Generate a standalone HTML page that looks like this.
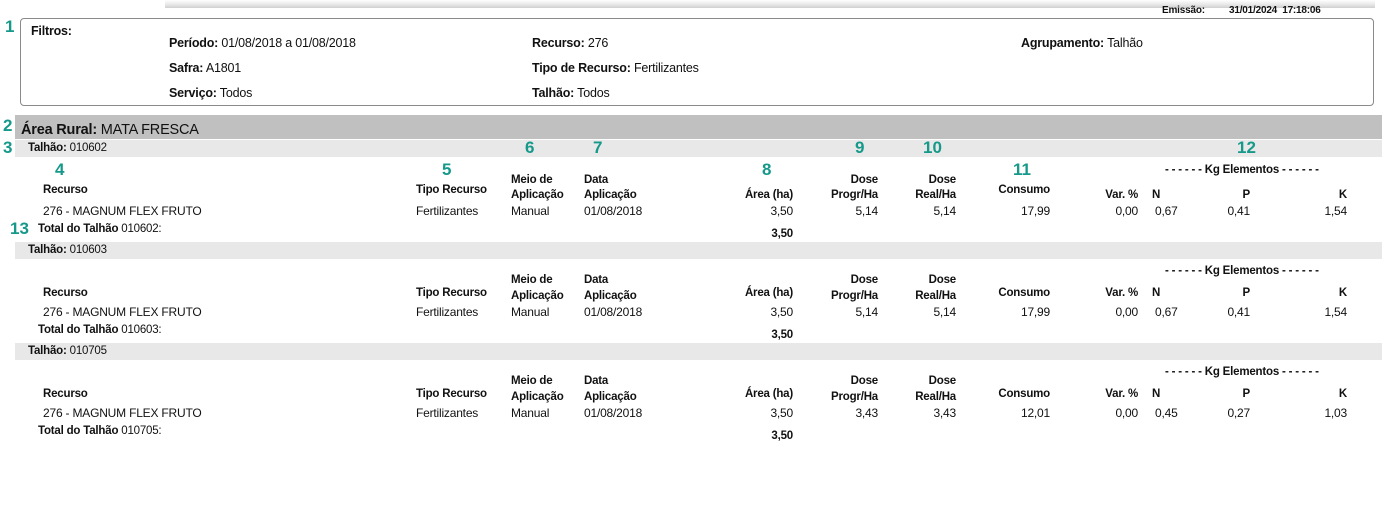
<!DOCTYPE html>
<html><head><meta charset="utf-8"><style>
body{margin:0;width:1394px;height:532px;background:#fff;position:relative;overflow:hidden;font-family:"Liberation Sans",Arial,sans-serif;color:#111;}
.a{position:absolute;white-space:nowrap;font-size:12px;line-height:14px;letter-spacing:-0.2px}
.r{text-align:right}
b{font-weight:bold}
.g{position:absolute;color:#16998a;font-weight:bold;font-size:17px;line-height:18px;z-index:10}
.f{font-size:12.5px}
.bar{position:absolute;left:15px;width:1367px;height:17px;background:#e8e8e8}
</style></head><body>
<div style="position:absolute;left:165px;top:0;width:1210px;height:8px;background:linear-gradient(#fff,#e6e6e6 60%,#cfcfcf)"></div>
<div class="a" style="left:1162px;top:4px;font-size:10px;font-weight:bold">Emissão:</div>
<div class="a" style="left:1229px;top:4px;font-size:10px;font-weight:bold">31/01/2024&nbsp; 17:18:06</div>
<div style="position:absolute;left:20px;top:18px;width:1352px;height:86px;border:1.5px solid #8a8a8a;border-radius:4px"></div>
<div class="g" style="left:5px;top:18px">1</div>
<div class="a f" style="left:31px;top:24px"><b>Filtros:</b></div>
<div class="a f" style="left:169px;top:36px"><b>Período:</b> 01/08/2018 a 01/08/2018</div>
<div class="a f" style="left:169px;top:61px"><b>Safra:</b> A1801</div>
<div class="a f" style="left:169px;top:86px"><b>Serviço:</b> Todos</div>
<div class="a f" style="left:532px;top:36px"><b>Recurso:</b> 276</div>
<div class="a f" style="left:532px;top:61px"><b>Tipo de Recurso:</b> Fertilizantes</div>
<div class="a f" style="left:532px;top:86px"><b>Talhão:</b> Todos</div>
<div class="a f" style="left:1021px;top:36px"><b>Agrupamento:</b> Talhão</div>
<div style="position:absolute;left:15px;top:115px;width:1367px;height:24px;background:#c0c0c0"></div>
<div class="g" style="left:3px;top:117px">2</div>
<div class="a" style="left:21px;top:122px;font-size:14.5px;line-height:16px"><b>Área Rural:</b> MATA FRESCA</div>
<div class="g" style="left:3px;top:139px">3</div>
<div class="g" style="left:55px;top:161px">4</div>
<div class="g" style="left:442px;top:161px">5</div>
<div class="g" style="left:525px;top:139px">6</div>
<div class="g" style="left:593px;top:139px">7</div>
<div class="g" style="left:762px;top:161px">8</div>
<div class="g" style="left:855px;top:139px">9</div>
<div class="g" style="left:923px;top:139px">10</div>
<div class="g" style="left:1013px;top:161px">11</div>
<div class="g" style="left:1237px;top:139px">12</div>
<div class="g" style="left:10px;top:220px">13</div>

<div style="position:absolute;left:0;top:140px;width:1394px;height:102px">
<div class="bar" style="top:0"></div>
<div class="a" style="left:28px;top:1px;font-size:11.5px"><b>Talhão:</b> 010602</div>
<div class="a" style="left:1165px;top:23px;font-weight:bold;font-size:11.5px">- - - - - - Kg Elementos - - - - - -</div>
<div class="a" style="left:511px;top:33px;font-weight:bold;font-size:11.5px">Meio de</div>
<div class="a" style="left:584px;top:33px;font-weight:bold;font-size:11.5px">Data</div>
<div class="a r" style="right:516px;top:33px;font-weight:bold;font-size:11.5px">Dose</div>
<div class="a r" style="right:438px;top:33px;font-weight:bold;font-size:11.5px">Dose</div>
<div class="a" style="left:43px;top:43px;font-weight:bold;font-size:11.5px">Recurso</div>
<div class="a" style="left:416px;top:43px;font-weight:bold;font-size:11.5px">Tipo Recurso</div>
<div class="a r" style="right:344px;top:43px;font-weight:bold;font-size:11.5px">Consumo</div>
<div class="a" style="left:511px;top:48px;font-weight:bold;font-size:11.5px">Aplicação</div>
<div class="a" style="left:584px;top:48px;font-weight:bold;font-size:11.5px">Aplicação</div>
<div class="a r" style="right:601px;top:48px;font-weight:bold;font-size:11.5px">Área (ha)</div>
<div class="a r" style="right:516px;top:48px;font-weight:bold;font-size:11.5px">Progr/Ha</div>
<div class="a r" style="right:438px;top:48px;font-weight:bold;font-size:11.5px">Real/Ha</div>
<div class="a r" style="right:256px;top:48px;font-weight:bold;font-size:11.5px">Var. %</div>
<div class="a" style="left:1152px;top:48px;font-weight:bold;font-size:11.5px">N</div>
<div class="a r" style="right:144px;top:48px;font-weight:bold;font-size:11.5px">P</div>
<div class="a r" style="right:47px;top:48px;font-weight:bold;font-size:11.5px">K</div>
<div class="a" style="left:43px;top:64px">276 - MAGNUM FLEX FRUTO</div>
<div class="a" style="left:416px;top:64px">Fertilizantes</div>
<div class="a" style="left:511px;top:64px">Manual</div>
<div class="a" style="left:584px;top:64px">01/08/2018</div>
<div class="a r" style="right:601px;top:64px">3,50</div>
<div class="a r" style="right:516px;top:64px">5,14</div>
<div class="a r" style="right:438px;top:64px">5,14</div>
<div class="a r" style="right:344px;top:64px">17,99</div>
<div class="a r" style="right:256px;top:64px">0,00</div>
<div class="a" style="left:1155px;top:64px">0,67</div>
<div class="a r" style="right:144px;top:64px">0,41</div>
<div class="a r" style="right:47px;top:64px">1,54</div>
<div class="a" style="left:38px;top:82px;font-size:11.5px"><b>Total do Talhão</b> 010602:</div>
<div class="a r" style="right:601px;top:87px;font-weight:bold;font-size:11.5px">3,50</div>
</div>

<div style="position:absolute;left:0;top:242px;width:1394px;height:101px">
<div class="bar" style="top:0"></div>
<div class="a" style="left:28px;top:1px;font-size:11.5px"><b>Talhão:</b> 010603</div>
<div class="a" style="left:1165px;top:22px;font-weight:bold;font-size:11.5px">- - - - - - Kg Elementos - - - - - -</div>
<div class="a" style="left:511px;top:31px;font-weight:bold;font-size:11.5px">Meio de</div>
<div class="a" style="left:584px;top:31px;font-weight:bold;font-size:11.5px">Data</div>
<div class="a r" style="right:516px;top:31px;font-weight:bold;font-size:11.5px">Dose</div>
<div class="a r" style="right:438px;top:31px;font-weight:bold;font-size:11.5px">Dose</div>
<div class="a" style="left:43px;top:44px;font-weight:bold;font-size:11.5px">Recurso</div>
<div class="a" style="left:416px;top:44px;font-weight:bold;font-size:11.5px">Tipo Recurso</div>
<div class="a r" style="right:344px;top:44px;font-weight:bold;font-size:11.5px">Consumo</div>
<div class="a" style="left:511px;top:47px;font-weight:bold;font-size:11.5px">Aplicação</div>
<div class="a" style="left:584px;top:47px;font-weight:bold;font-size:11.5px">Aplicação</div>
<div class="a r" style="right:601px;top:44px;font-weight:bold;font-size:11.5px">Área (ha)</div>
<div class="a r" style="right:516px;top:47px;font-weight:bold;font-size:11.5px">Progr/Ha</div>
<div class="a r" style="right:438px;top:47px;font-weight:bold;font-size:11.5px">Real/Ha</div>
<div class="a r" style="right:256px;top:44px;font-weight:bold;font-size:11.5px">Var. %</div>
<div class="a" style="left:1152px;top:44px;font-weight:bold;font-size:11.5px">N</div>
<div class="a r" style="right:144px;top:44px;font-weight:bold;font-size:11.5px">P</div>
<div class="a r" style="right:47px;top:44px;font-weight:bold;font-size:11.5px">K</div>
<div class="a" style="left:43px;top:63px">276 - MAGNUM FLEX FRUTO</div>
<div class="a" style="left:416px;top:63px">Fertilizantes</div>
<div class="a" style="left:511px;top:63px">Manual</div>
<div class="a" style="left:584px;top:63px">01/08/2018</div>
<div class="a r" style="right:601px;top:63px">3,50</div>
<div class="a r" style="right:516px;top:63px">5,14</div>
<div class="a r" style="right:438px;top:63px">5,14</div>
<div class="a r" style="right:344px;top:63px">17,99</div>
<div class="a r" style="right:256px;top:63px">0,00</div>
<div class="a" style="left:1155px;top:63px">0,67</div>
<div class="a r" style="right:144px;top:63px">0,41</div>
<div class="a r" style="right:47px;top:63px">1,54</div>
<div class="a" style="left:38px;top:81px;font-size:11.5px"><b>Total do Talhão</b> 010603:</div>
<div class="a r" style="right:601px;top:86px;font-weight:bold;font-size:11.5px">3,50</div>
</div>

<div style="position:absolute;left:0;top:343px;width:1394px;height:101px">
<div class="bar" style="top:0"></div>
<div class="a" style="left:28px;top:1px;font-size:11.5px"><b>Talhão:</b> 010705</div>
<div class="a" style="left:1165px;top:22px;font-weight:bold;font-size:11.5px">- - - - - - Kg Elementos - - - - - -</div>
<div class="a" style="left:511px;top:31px;font-weight:bold;font-size:11.5px">Meio de</div>
<div class="a" style="left:584px;top:31px;font-weight:bold;font-size:11.5px">Data</div>
<div class="a r" style="right:516px;top:31px;font-weight:bold;font-size:11.5px">Dose</div>
<div class="a r" style="right:438px;top:31px;font-weight:bold;font-size:11.5px">Dose</div>
<div class="a" style="left:43px;top:44px;font-weight:bold;font-size:11.5px">Recurso</div>
<div class="a" style="left:416px;top:44px;font-weight:bold;font-size:11.5px">Tipo Recurso</div>
<div class="a r" style="right:344px;top:44px;font-weight:bold;font-size:11.5px">Consumo</div>
<div class="a" style="left:511px;top:47px;font-weight:bold;font-size:11.5px">Aplicação</div>
<div class="a" style="left:584px;top:47px;font-weight:bold;font-size:11.5px">Aplicação</div>
<div class="a r" style="right:601px;top:44px;font-weight:bold;font-size:11.5px">Área (ha)</div>
<div class="a r" style="right:516px;top:47px;font-weight:bold;font-size:11.5px">Progr/Ha</div>
<div class="a r" style="right:438px;top:47px;font-weight:bold;font-size:11.5px">Real/Ha</div>
<div class="a r" style="right:256px;top:44px;font-weight:bold;font-size:11.5px">Var. %</div>
<div class="a" style="left:1152px;top:44px;font-weight:bold;font-size:11.5px">N</div>
<div class="a r" style="right:144px;top:44px;font-weight:bold;font-size:11.5px">P</div>
<div class="a r" style="right:47px;top:44px;font-weight:bold;font-size:11.5px">K</div>
<div class="a" style="left:43px;top:63px">276 - MAGNUM FLEX FRUTO</div>
<div class="a" style="left:416px;top:63px">Fertilizantes</div>
<div class="a" style="left:511px;top:63px">Manual</div>
<div class="a" style="left:584px;top:63px">01/08/2018</div>
<div class="a r" style="right:601px;top:63px">3,50</div>
<div class="a r" style="right:516px;top:63px">3,43</div>
<div class="a r" style="right:438px;top:63px">3,43</div>
<div class="a r" style="right:344px;top:63px">12,01</div>
<div class="a r" style="right:256px;top:63px">0,00</div>
<div class="a" style="left:1155px;top:63px">0,45</div>
<div class="a r" style="right:144px;top:63px">0,27</div>
<div class="a r" style="right:47px;top:63px">1,03</div>
<div class="a" style="left:38px;top:81px;font-size:11.5px"><b>Total do Talhão</b> 010705:</div>
<div class="a r" style="right:601px;top:86px;font-weight:bold;font-size:11.5px">3,50</div>
</div>
</body></html>
